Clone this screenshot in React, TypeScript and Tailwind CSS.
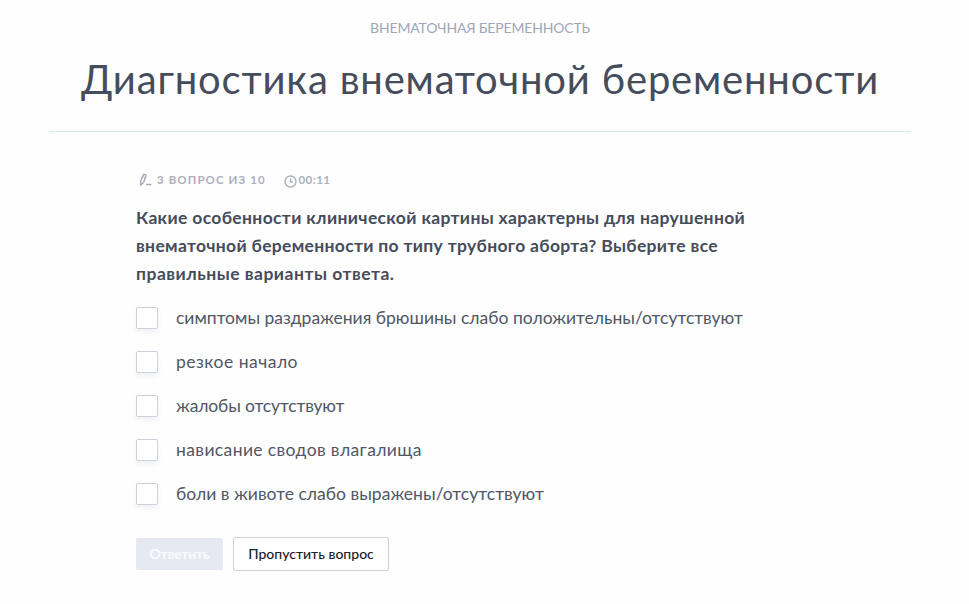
import React from 'react';

const question = [
  { text: 'Какие особенности клинической картины характерны для нарушенной', tracking: 'tracking-[0.34px]' },
  { text: 'внематочной беременности по типу трубного аборта? Выберите все', tracking: 'tracking-[0.31px]' },
  { text: 'правильные варианты ответа.', tracking: 'tracking-[0.5px]' },
];

const options = [
  { text: 'симптомы раздражения брюшины слабо положительны/отсутствуют', tracking: 'tracking-[0px]' },
  { text: 'резкое начало', tracking: 'tracking-[0.49px]' },
  { text: 'жалобы отсутствуют', tracking: 'tracking-[-0.14px]' },
  { text: 'нависание сводов влагалища', tracking: 'tracking-[0.38px]' },
  { text: 'боли в животе слабо выражены/отсутствуют', tracking: 'tracking-[0.02px]' },
];

function PencilIcon() {
  return (
    <svg width="14" height="14" viewBox="0 0 14 14" fill="none" stroke="#a3a9b7" strokeWidth="1.4" strokeLinejoin="round">
      <path d="M2.6 8.6 4.9 2.5Q5.6 1.1 7 1.6 8.3 2.2 7.9 3.5L5.4 9.8 2.7 12Z" />
      <path d="M4.6 3.6 7.4 4.7" strokeWidth="0.8" />
      <path d="M8 11.5H13.4" strokeWidth="1.4" />
    </svg>
  );
}

function ClockIcon() {
  return (
    <svg width="13" height="13" viewBox="0 0 13 13" fill="none" stroke="#a9afbd" strokeWidth="1.4">
      <circle cx="6.5" cy="6.5" r="5.5" />
      <path d="M6.5 3.5V6.7H8.8" />
    </svg>
  );
}

export default function App() {
  return (
    <div className="h-[604px] w-[969px] overflow-hidden bg-[#fefefe] font-[Lato,'Open_Sans',sans-serif] text-[#454c5b]">
      <header className="ml-[49px] h-[132px] w-[862px] border-b border-[#dbe7e8] text-center whitespace-nowrap">
        <p className="pt-[18px] text-[14px] leading-5 tracking-[-0.16px] text-[#9fa6b9]">ВНЕМАТОЧНАЯ БЕРЕМЕННОСТЬ</p>
        <h1 className="mt-[16px] text-[40px] leading-[50px] tracking-[0.82px]">Диагностика внематочной беременности</h1>
      </header>
      <main className="ml-[136px] pt-[38px] whitespace-nowrap">
        <div className="flex h-5 items-center text-[11.5px] font-bold text-[#abb0bd]">
          <div className="flex w-[147px] items-center gap-[5px] pl-[2px]">
            <PencilIcon />
            <span className="tracking-[1.1px]">3 ВОПРОС ИЗ 10</span>
          </div>
          <div className="flex items-center gap-[2px] pl-[0.5px]">
            <span className="pt-[2px]"><ClockIcon /></span>
            <span className="tracking-[0.45px]">00:11</span>
          </div>
        </div>
        <div className="mt-[14px] text-[17.5px] leading-7 font-bold">
          {question.map((line) => (
            <p key={line.text} className={line.tracking}>{line.text}</p>
          ))}
        </div>
        <div className="mt-[8px]">
          {options.map((option) => (
            <label key={option.text} className="flex h-11 items-center gap-[18px] text-[17.5px] text-[#505766]">
              <span className="size-[22px] rounded-[2px] border border-[#cdd1dc] bg-white shadow-[0_3px_5px_rgba(60,70,100,0.07)]" />
              <span className={option.tracking}>{option.text}</span>
            </label>
          ))}
        </div>
        <div className="mt-[21px] flex items-center gap-[10px] text-[14px]">
          <button className="h-8 w-[87px] rounded-[2px] bg-[#e6e9f2] pb-px font-bold tracking-[-0.3px] text-[#fafbfd]">Ответить</button>
          <button className="h-[34px] w-[156px] rounded-[2px] border border-[#cdd1dc] bg-white pb-px font-medium text-[#20232b]">Пропустить вопрос</button>
        </div>
      </main>
    </div>
  );
}
